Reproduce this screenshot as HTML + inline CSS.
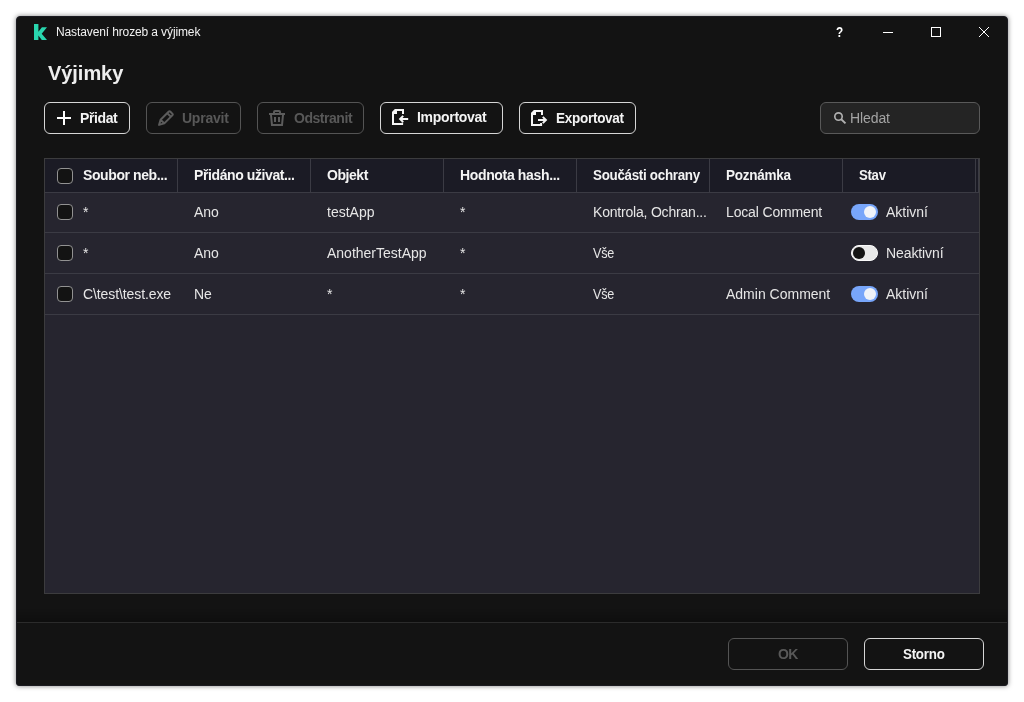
<!DOCTYPE html>
<html lang="cs">
<head>
<meta charset="utf-8">
<title>Nastavení hrozeb a výjimek</title>
<style>
*{box-sizing:border-box;margin:0;padding:0}
html,body{width:1024px;height:702px;overflow:hidden;background:#fff}
body{font-family:"Liberation Sans",sans-serif;font-size:14px;color:#ececec;position:relative}
.win{position:absolute;left:16px;top:16px;width:992px;height:670px;background:#131313;border-radius:4px 4px 3px 3px;border:1px solid #1b1b21;box-shadow:0 0 5px rgba(0,0,0,.5)}
.abs{position:absolute;white-space:nowrap;line-height:16px}
.tt{left:56px;top:24px;font-size:12px;color:#f2f2f2;letter-spacing:-.12px}
.h1{left:48px;top:61px;font-size:20px;line-height:24px;font-weight:700;color:#eeeeee;letter-spacing:-.05px}
.btn{position:absolute;top:102px;height:32px;border:1px solid #d6d6d6;border-radius:6px;background:#131313}
.btn.dis{border-color:#545454}
.btn span{position:absolute;top:7px;font-weight:700;font-size:14px;line-height:16px;color:#f4f4f4;white-space:nowrap}
.btn.dis span{color:#585858}
.btn svg{position:absolute}
.search{position:absolute;left:820px;top:102px;width:160px;height:32px;border:1px solid #595959;border-radius:6px;background:#242424}
.search span{position:absolute;left:29px;top:7px;font-size:14px;line-height:16px;color:#a4a4a4;letter-spacing:-.1px}
.table{position:absolute;left:44px;top:158px;width:936px;height:436px;background:#26252f;border:1px solid #3c3c3e}
.thead{position:absolute;left:0;top:0;width:934px;height:34px;background:#1b1b25;border-bottom:1px solid #3b3b44}
.vsep{position:absolute;top:0;width:1px;height:34px;background:#3b3b44}
.hsep{position:absolute;left:0;width:934px;height:1px;background:#3b3b44}
.th{position:absolute;top:8px;font-weight:700;color:#f4f4f4;line-height:16px;white-space:nowrap}
.td{position:absolute;line-height:16px;white-space:nowrap;color:#e6e6e6}
.cb{position:absolute;left:12px;width:16px;height:16px;border:1px solid #929292;border-radius:4px;background:#131313}
.tg{position:absolute;left:806px;width:27px;height:16px;border-radius:8px;background:#78a6fa}
.tg i{position:absolute;right:2px;top:2px;width:12px;height:12px;border-radius:6px;background:#f0f3f8}
.tg.off{background:#e9e9e9;border:1px solid #fbfbfb}
.tg.off i{right:auto;left:1px;top:1px;background:#131313}
.foot{position:absolute;left:17px;top:622px;width:990px;height:1px;background:#2b2b2b}
.footsh{position:absolute;left:17px;top:609px;width:990px;height:13px;background:linear-gradient(to bottom,rgba(0,0,0,0),rgba(0,0,0,.24))}
</style>
</head>
<body>
<div class="win"></div>
<div id="layer" style="position:absolute;left:0;top:0;width:1024px;height:702px;will-change:transform">

<!-- title bar -->
<svg class="abs" style="left:34px;top:24px" width="13" height="16" viewBox="0 0 13 16"><path d="M0 0H4.4V7.7L7.9 3.2H13L7.7 9.7 13 16H7.8L4.4 11.6V16H0Z" fill="#29d6ae"/></svg>
<div class="abs tt">Nastavení hrozeb a výjimek</div>
<div class="abs" style="left:836px;top:24px;font-weight:700;font-size:14px;color:#fff;transform:scaleX(.84);transform-origin:0 50%">?</div>
<svg class="abs" style="left:883px;top:27px" width="10" height="10"><path d="M0 5.5H10" stroke="#fff" stroke-width="1"/></svg>
<svg class="abs" style="left:931px;top:27px" width="10" height="10"><rect x=".5" y=".5" width="9" height="9" fill="none" stroke="#fff" stroke-width="1"/></svg>
<svg class="abs" style="left:979px;top:27px" width="10" height="10"><path d="M0 0 10 10M10 0 0 10" stroke="#fff" stroke-width="1"/></svg>

<div class="abs h1">Výjimky</div>

<!-- toolbar -->
<div class="btn" style="left:44px;width:86px">
  <svg style="left:12px;top:8px" width="14" height="14"><path d="M7 0V14M0 7H14" stroke="#fff" stroke-width="2"/></svg>
  <span style="left:35px;letter-spacing:-.4px">Přidat</span>
</div>
<div class="btn dis" style="left:146px;width:95px">
  <svg style="left:11px;top:7px" width="16" height="16" viewBox="0 0 16 16"><path d="M1.1 14.9 2.6 9.7 10.6 1.7Q11.5 .8 12.4 1.7L14.3 3.6Q15.2 4.5 14.3 5.4L6.3 13.4ZM2.6 9.7 6.3 13.4M9.2 3.1 12.9 6.8" fill="none" stroke="#5c5c5c" stroke-width="2" stroke-linejoin="round"/></svg>
  <span style="left:35px;letter-spacing:-.24px">Upravit</span>
</div>
<div class="btn dis" style="left:257px;width:107px">
  <svg style="left:11px;top:7px" width="16" height="16" viewBox="0 0 16 16"><path d="M0 3H16V5H0ZM5 7H7V12H5ZM9 7H11V12H9Z" fill="#5c5c5c"/><path d="M5 3.5V2Q5 1 6 1H10Q11 1 11 2V3.5M2 5 3 15H13L14 5" fill="none" stroke="#5c5c5c" stroke-width="2"/></svg>
  <span style="left:36px;letter-spacing:-.46px">Odstranit</span>
</div>
<div class="btn" style="left:380px;width:123px">
  <svg style="left:11px;top:6px" width="17" height="16" viewBox="0 0 17 16"><path d="M11 5.1V1H3.4L1 3.4V15H11.1" fill="none" stroke="#f6f6f6" stroke-width="2"/><path d="M0 3.3 3.3 0H5V5H0ZM9.1 12.9H11.1V14.5H9.1Z" fill="#f6f6f6"/><path d="M8.1 10H16.2M11.2 6.9 8.1 10 11.2 13.1" fill="none" stroke="#131313" stroke-width="3.6"/><path d="M8.1 10H16.2M11.2 6.9 8.1 10 11.2 13.1" fill="none" stroke="#f6f6f6" stroke-width="2"/></svg>
  <span style="left:36px;top:6px;letter-spacing:-.3px">Importovat</span>
</div>
<div class="btn" style="left:519px;width:117px">
  <svg style="left:11px;top:7px" width="17" height="16" viewBox="0 0 17 16"><path d="M11 5.1V1H3.4L1 3.4V15H11.1" fill="none" stroke="#f6f6f6" stroke-width="2"/><path d="M0 3.3 3.3 0H5V5H0ZM9.1 12.9H11.1V14.5H9.1Z" fill="#f6f6f6"/><path d="M7 10H14.9M11.8 6.9 14.9 10 11.8 13.1" fill="none" stroke="#131313" stroke-width="3.6"/><path d="M7 10H14.9M11.8 6.9 14.9 10 11.8 13.1" fill="none" stroke="#f6f6f6" stroke-width="2"/></svg>
  <span style="left:36px;letter-spacing:-.3px;transform:scaleX(.967);transform-origin:0 50%">Exportovat</span>
</div>
<div class="search">
  <svg style="position:absolute;left:12px;top:8px" width="14" height="14" viewBox="0 0 14 14"><circle cx="5.5" cy="5.5" r="3.7" fill="none" stroke="#b0b0b0" stroke-width="1.65"/><path d="M8.2 8.2 12.5 12.4" stroke="#b0b0b0" stroke-width="1.9"/></svg>
  <span>Hledat</span>
</div>

<!-- table -->
<div class="table">
  <div class="thead">
    <div class="cb" style="top:9px"></div>
    <div class="th" style="left:38px;letter-spacing:-.4px">Soubor neb...</div>
    <div class="vsep" style="left:132px"></div>
    <div class="th" style="left:149px;letter-spacing:-.4px">Přidáno uživat...</div>
    <div class="vsep" style="left:265px"></div>
    <div class="th" style="left:282px;letter-spacing:-.45px">Objekt</div>
    <div class="vsep" style="left:398px"></div>
    <div class="th" style="left:415px;letter-spacing:-.35px">Hodnota hash...</div>
    <div class="vsep" style="left:531px"></div>
    <div class="th" style="left:548px;letter-spacing:-.3px;transform:scaleX(.955);transform-origin:0 50%">Součásti ochrany</div>
    <div class="vsep" style="left:664px"></div>
    <div class="th" style="left:681px;letter-spacing:-.25px;transform:scaleX(.965);transform-origin:0 50%">Poznámka</div>
    <div class="vsep" style="left:797px"></div>
    <div class="th" style="left:814px;letter-spacing:-.3px;transform:scaleX(.94);transform-origin:0 50%">Stav</div>
    <div class="vsep" style="left:930px"></div>
    <div class="vsep" style="left:933px"></div>
  </div>
  <!-- row 1 -->
  <div class="cb" style="top:45px"></div>
  <div class="td" style="left:38px;top:45px">*</div>
  <div class="td" style="left:149px;top:45px">Ano</div>
  <div class="td" style="left:282px;top:45px">testApp</div>
  <div class="td" style="left:415px;top:45px">*</div>
  <div class="td" style="left:548px;top:45px;letter-spacing:-.2px">Kontrola, Ochran...</div>
  <div class="td" style="left:681px;top:45px;letter-spacing:-.15px">Local Comment</div>
  <div class="tg" style="top:45px"><i></i></div>
  <div class="td" style="left:841px;top:45px;letter-spacing:0">Aktivní</div>
  <div class="hsep" style="top:73px"></div>
  <!-- row 2 -->
  <div class="cb" style="top:86px"></div>
  <div class="td" style="left:38px;top:86px">*</div>
  <div class="td" style="left:149px;top:86px">Ano</div>
  <div class="td" style="left:282px;top:86px">AnotherTestApp</div>
  <div class="td" style="left:415px;top:86px">*</div>
  <div class="td" style="left:548px;top:86px;letter-spacing:-.3px;transform:scaleX(.9);transform-origin:0 50%">Vše</div>
  <div class="tg off" style="top:86px"><i></i></div>
  <div class="td" style="left:841px;top:86px;letter-spacing:-.1px">Neaktivní</div>
  <div class="hsep" style="top:114px"></div>
  <!-- row 3 -->
  <div class="cb" style="top:127px"></div>
  <div class="td" style="left:38px;top:127px;letter-spacing:-.1px">C\test\test.exe</div>
  <div class="td" style="left:149px;top:127px">Ne</div>
  <div class="td" style="left:282px;top:127px">*</div>
  <div class="td" style="left:415px;top:127px">*</div>
  <div class="td" style="left:548px;top:127px;letter-spacing:-.3px;transform:scaleX(.9);transform-origin:0 50%">Vše</div>
  <div class="td" style="left:681px;top:127px">Admin Comment</div>
  <div class="tg" style="top:127px"><i></i></div>
  <div class="td" style="left:841px;top:127px">Aktivní</div>
  <div class="hsep" style="top:155px"></div>
</div>

<!-- footer -->
<div class="footsh"></div>
<div class="foot"></div>
<div class="btn dis" style="left:728px;top:638px;width:120px"><span style="left:49px;letter-spacing:-.7px">OK</span></div>
<div class="btn" style="left:864px;top:638px;width:120px"><span style="left:38px;letter-spacing:-.25px;transform:scaleX(.953);transform-origin:0 50%">Storno</span></div>
</div>
</body>
</html>
